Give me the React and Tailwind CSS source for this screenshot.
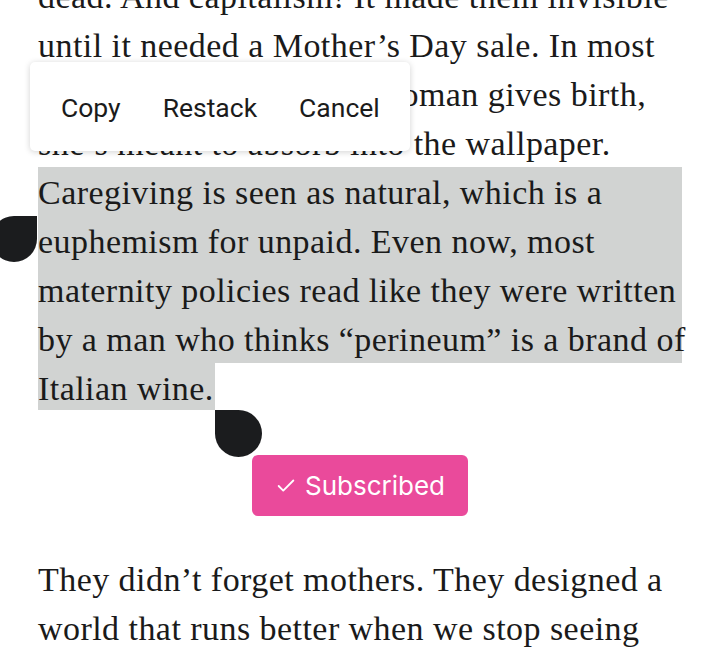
import React from 'react';
import { Check } from 'lucide-react';

const before = [
  'dead. And capitalism! It made them invisible',
  'until it needed a Mother\u2019s Day sale. In most',
  'societies, the moment a woman gives birth,',
  'she\u2019s meant to absorb into the wallpaper.',
];

const selected = [
  'Caregiving is seen as natural, which is a',
  'euphemism for unpaid. Even now, most',
  'maternity policies read like they were written',
  'by a man who thinks \u201cperineum\u201d is a brand of',
];

const after = [
  'They didn\u2019t forget mothers. They designed a',
  'world that runs better when we stop seeing',
];

const serif = "font-['Liberation_Serif',serif] text-[34px] tracking-[0.45px] text-[#1a1a1a]";
const line = 'h-[49px] whitespace-nowrap pt-[3px] leading-[46px]';

const App = () => {
  return (
    <div className="relative h-[657px] w-[720px] overflow-hidden bg-white">
      <div className={`mt-[-29px] px-[38px] ${serif}`}>
        {before.map((t) => (
          <div key={t} className={line}>{t}</div>
        ))}
        {selected.map((t) => (
          <div key={t} className={`${line} bg-[#d1d3d2]`}>{t}</div>
        ))}
        <div className="h-[49px] whitespace-nowrap">
          <span className="inline-block h-[47px] bg-[#d1d3d2] pt-[3px] pr-[1px] leading-[46px]">Italian wine.</span>
        </div>

        <div className="flex justify-center pt-[43px] pb-[38px]">
          <button className="flex h-[61px] w-[216px] items-center justify-center gap-[8px] rounded-md bg-[#ea4a9b] font-['Inter',sans-serif] text-[26px] tracking-normal text-white">
            <Check className="h-[22px] w-[22px]" strokeWidth={2} />
            Subscribed
          </button>
        </div>

        {after.map((t) => (
          <div key={t} className={line}>{t}</div>
        ))}
      </div>

      {/* text selection toolbar */}
      <div className="absolute left-[30px] top-[62px] flex h-[89px] w-[380px] items-center gap-[42px] rounded-[5px] bg-white pl-[31px] pt-[2px] font-['Roboto',sans-serif] text-[26.5px] text-[#1b1b1b] shadow-[0_1px_6px_rgba(0,0,0,0.18)]">
        <span>Copy</span>
        <span>Restack</span>
        <span>Cancel</span>
      </div>

      {/* selection handles */}
      <div className="absolute left-[-9px] top-[216px] h-[46px] w-[46px] rounded-full rounded-tr-none bg-[#1b1c1e]" />
      <div className="absolute left-[215px] top-[410px] h-[47px] w-[47px] rounded-full rounded-tl-none bg-[#1b1c1e]" />
    </div>
  );
};

export default App;
